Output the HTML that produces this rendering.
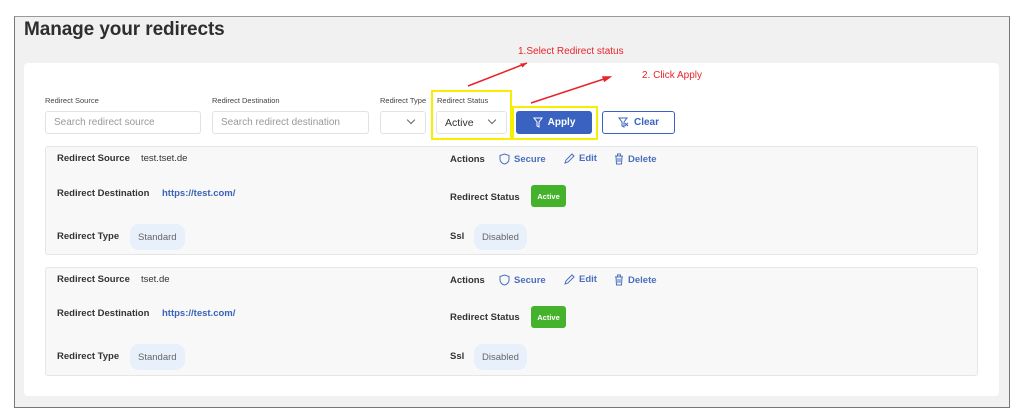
<!DOCTYPE html>
<html><head><style>
*{box-sizing:border-box;margin:0;padding:0}
body{width:1024px;height:420px;background:#fff;font-family:"Liberation Sans",sans-serif;position:relative;overflow:hidden;color:#333}
.frame{position:absolute;left:14px;top:16px;width:996px;height:392px;border:1px solid #777;border-top:1px solid #999;background:#f1f1f1}
h1{position:absolute;left:24px;top:19px;font-size:19px;font-weight:bold;color:#2e2e2e;letter-spacing:-0.1px}
.card{position:absolute;left:24px;top:63px;width:975px;height:333px;background:#fff;border-radius:4px}
.lbl{position:absolute;font-size:7.5px;color:#444;top:96px}
.inp{position:absolute;top:111px;height:23px;border:1px solid #e2e2e2;border-radius:3px;background:#fff;font-size:10px;color:#999;padding:5px 8px}
.chev{position:absolute;width:6px;height:6px;border-right:1px solid #666;border-bottom:1px solid #666;transform:rotate(45deg)}
.yb{position:absolute;border:2px solid #f6f000}
.btn{position:absolute;top:111px;height:23px;border-radius:3px;font-size:10px;font-weight:bold;display:flex;align-items:center;justify-content:center;gap:5px}
.item{position:absolute;left:45px;width:933px;height:109px;background:#f8f8f8;border:1px solid #e6e6e6;border-radius:3px;font-size:9.5px}
.item b{position:absolute;font-weight:bold;color:#333;font-size:9.5px}
.item span{position:absolute}
.blue{color:#3b63b8}
.act{position:absolute;color:#4a6fbf;font-weight:bold;display:flex;align-items:center;gap:4px}
.badge{position:absolute;background:#44b22b;color:#fff;font-size:7.5px;font-weight:bold;border-radius:3px;width:35px;height:22px;display:flex;align-items:center;justify-content:center}
.pill{position:absolute;background:#e8f0fb;color:#666;border-radius:9px;height:26px;display:flex;align-items:center;padding:0 8px;font-size:9.5px}
.red{position:absolute;color:#e8242a;font-size:10px}
</style></head><body>
<div class="frame"></div>
<h1>Manage your redirects</h1>
<div class="card"></div>
<div class="lbl" style="left:45px">Redirect Source</div>
<div class="lbl" style="left:212px">Redirect Destination</div>
<div class="lbl" style="left:380px">Redirect Type</div>
<div class="lbl" style="left:437px">Redirect Status</div>
<div class="inp" style="left:45px;width:156px">Search redirect source</div>
<div class="inp" style="left:212px;width:157px">Search redirect destination</div>
<div class="inp" style="left:380px;width:46px"></div><div class="chev" style="left:408px;top:117px"></div>
<div class="inp" style="left:436px;width:71px;color:#333;font-size:10.5px">Active</div><div class="chev" style="left:489px;top:117px"></div>
<div class="yb" style="left:431px;top:90px;width:81px;height:50px"></div>
<div class="yb" style="left:512px;top:106px;width:86px;height:34px"></div>
<div class="btn" style="left:516px;width:76px;background:#3a62c0;color:#fff"><svg width="10" height="11" viewBox="0 0 10 11"><path d="M1 1h8L6 5v5L4 9V5z" fill="none" stroke="#fff" stroke-width="1"/></svg>Apply</div>
<div class="btn" style="left:602px;width:73px;border:1px solid #3a62c0;color:#3a62c0;background:#fff"><svg width="11" height="11" viewBox="0 0 11 11"><path d="M1 1h8L6 5v5L4 9V5z" fill="none" stroke="#3a62c0" stroke-width="1"/><path d="M7 6l3 3M10 6l-3 3" stroke="#3a62c0"/></svg>Clear</div>
<div class="red" style="left:518px;top:46px">1.Select Redirect status</div>
<div class="red" style="left:642px;top:70px">2. Click Apply</div>
<svg style="position:absolute;left:0;top:0" width="1024" height="420"><path d="M468 86L527 63" stroke="#e8242a" stroke-width="1.5"/><path d="M527 63l-7 0.5 2.5 4z" fill="#e8242a"/><path d="M531 103L610 77M610 77l-7 0 1.5 4z" stroke="#e8242a" stroke-width="1.5" fill="#e8242a"/></svg>

<div class="item" style="top:146px">
<b style="left:11px;top:6px">Redirect Source</b><span style="left:95px;top:6px">test.tset.de</span>
<b style="left:11px;top:41px">Redirect Destination</b><span class="blue" style="left:116px;top:41px;font-weight:bold">https://test.com/</span>
<b style="left:11px;top:84px">Redirect Type</b><div class="pill" style="left:84px;top:77px">Standard</div>
<b style="left:404px;top:7px">Actions</b>
<div class="act" style="left:453px;top:6px"><svg width="11" height="12" viewBox="0 0 11 12"><path d="M5.5 1L10 2.5V6c0 2.5-2 4.5-4.5 5C3 10.5 1 8.5 1 6V2.5z" fill="none" stroke="#4a6fbf"/></svg>Secure</div>
<div class="act" style="left:518px;top:6px"><svg width="11" height="11" viewBox="0 0 11 11"><path d="M1 10l1-3 6-6 2 2-6 6z" fill="none" stroke="#4a6fbf"/></svg>Edit</div>
<div class="act" style="left:568px;top:6px"><svg width="10" height="12" viewBox="0 0 10 12"><path d="M1 3h8M3.5 3V1h3v2M2 3l.5 8h5L8 3M4 5v4M6 5v4" fill="none" stroke="#4a6fbf"/></svg>Delete</div>
<b style="left:404px;top:45px">Redirect Status</b><div class="badge" style="left:485px;top:38px">Active</div>
<b style="left:404px;top:84px">Ssl</b><div class="pill" style="left:428px;top:77px">Disabled</div>
</div>

<div class="item" style="top:267px">
<b style="left:11px;top:6px">Redirect Source</b><span style="left:95px;top:6px">tset.de</span>
<b style="left:11px;top:40px">Redirect Destination</b><span class="blue" style="left:116px;top:40px;font-weight:bold">https://test.com/</span>
<b style="left:11px;top:83px">Redirect Type</b><div class="pill" style="left:84px;top:76px">Standard</div>
<b style="left:404px;top:7px">Actions</b>
<div class="act" style="left:453px;top:6px"><svg width="11" height="12" viewBox="0 0 11 12"><path d="M5.5 1L10 2.5V6c0 2.5-2 4.5-4.5 5C3 10.5 1 8.5 1 6V2.5z" fill="none" stroke="#4a6fbf"/></svg>Secure</div>
<div class="act" style="left:518px;top:6px"><svg width="11" height="11" viewBox="0 0 11 11"><path d="M1 10l1-3 6-6 2 2-6 6z" fill="none" stroke="#4a6fbf"/></svg>Edit</div>
<div class="act" style="left:568px;top:6px"><svg width="10" height="12" viewBox="0 0 10 12"><path d="M1 3h8M3.5 3V1h3v2M2 3l.5 8h5L8 3M4 5v4M6 5v4" fill="none" stroke="#4a6fbf"/></svg>Delete</div>
<b style="left:404px;top:44px">Redirect Status</b><div class="badge" style="left:485px;top:38px">Active</div>
<b style="left:404px;top:83px">Ssl</b><div class="pill" style="left:428px;top:76px">Disabled</div>
</div>
</body></html>
